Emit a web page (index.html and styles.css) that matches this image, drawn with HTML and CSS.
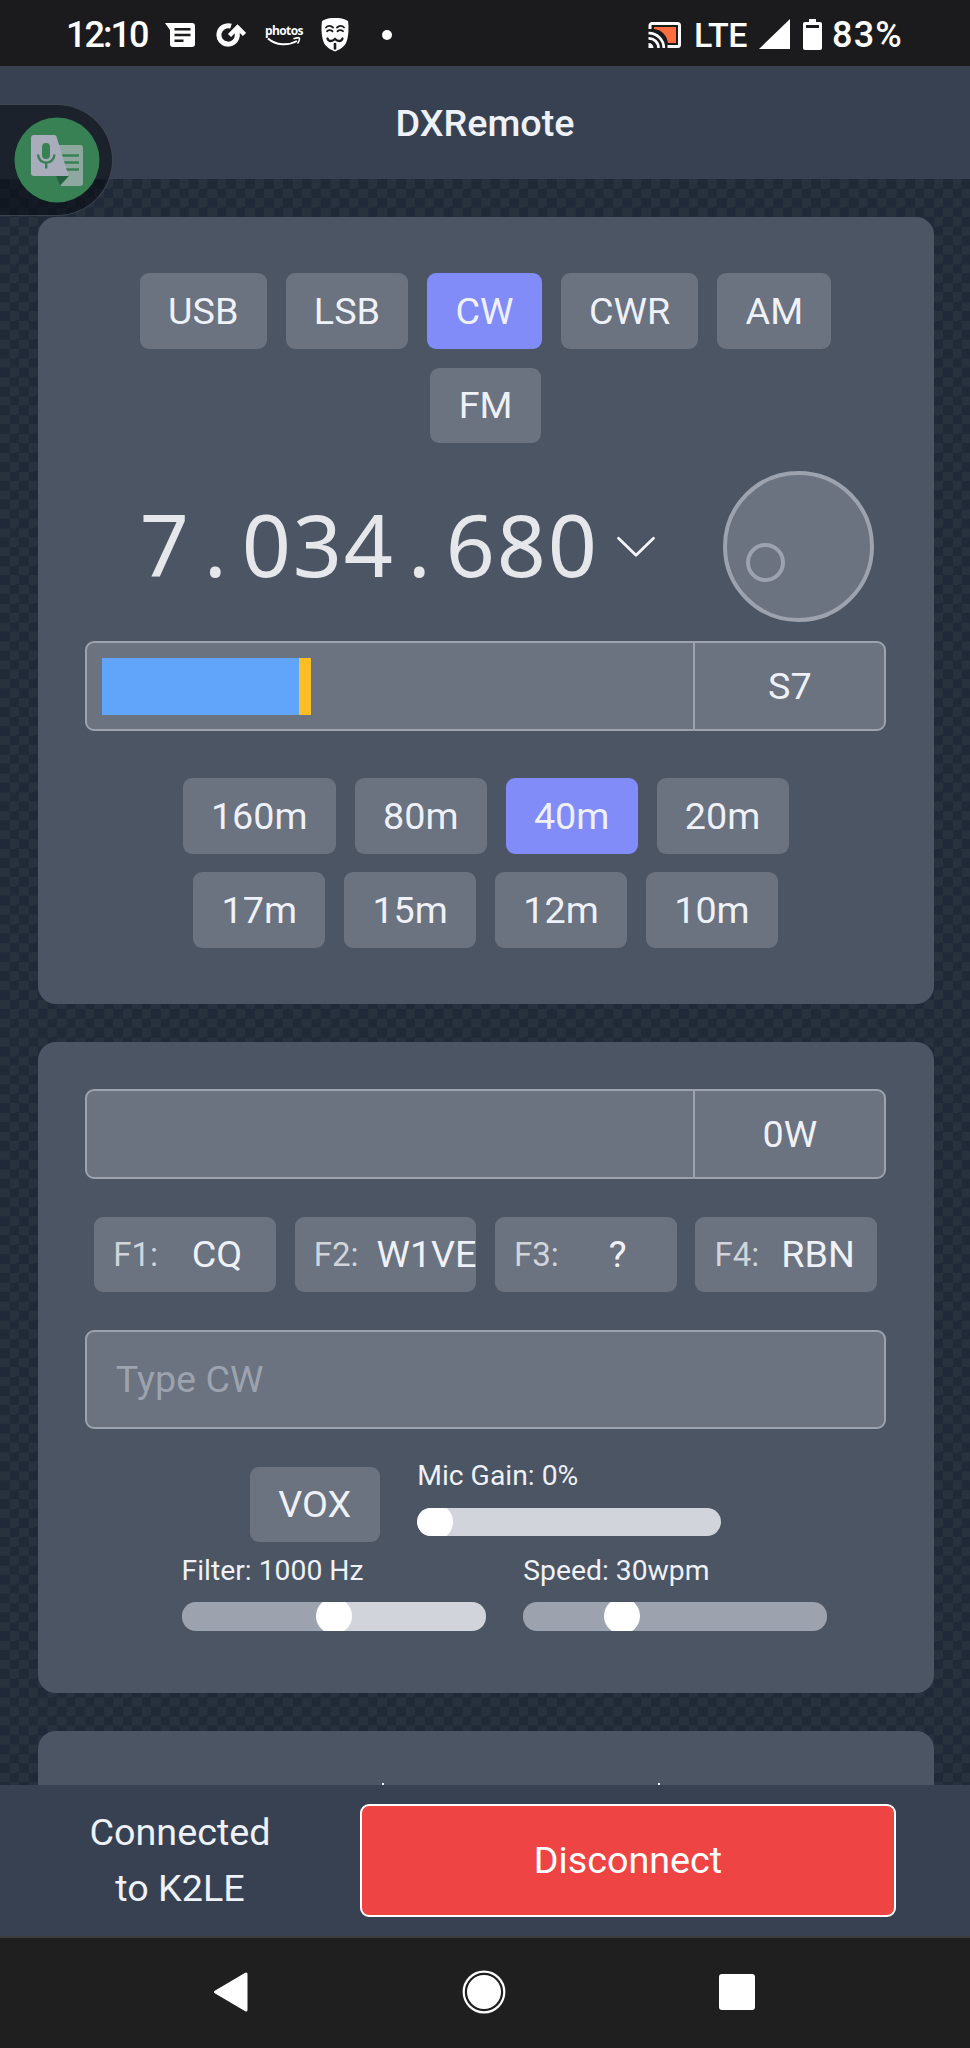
FILE: index.html
```
<!DOCTYPE html>
<html lang="en">
<head>
    <meta charset="UTF-8">
    <meta name="viewport" content="width=device-width, initial-scale=1.0">
    <title>DXRemote</title>
    <link rel="stylesheet" href="styles.css">
</head>
<body>

    <div class="status-bar">
        <div class="status-left">
            <span class="clock">12:10</span>
            <svg class="icon-message" width="30" height="24" viewBox="0 0 30 24">
                <path fill="#fff" d="M0 0h27a3 3 0 0 1 3 3v18a3 3 0 0 1-3 3H8a3 3 0 0 1-3-3V7z"/>
                <path stroke="#1b1b1d" stroke-width="2.4" d="M9.500 6.200h16M9.500 12h16M9.500 17.700h9"/>
            </svg>
            <svg class="icon-refresh" width="30" height="24" viewBox="0 0 30 24">
                <path fill="none" stroke="#fff" stroke-width="5" d="M15 3.200A9.200 9.200 0 1 0 21.300 11.500V6"/>
                <path fill="none" stroke="#fff" stroke-width="4.500" d="M13.500 12.500L21.500 4.500L28.500 11.500"/>
            </svg>
            <div class="icon-photos">
                <span>photos</span>
                <svg width="34" height="9" viewBox="0 0 34 9">
                    <path fill="none" stroke="#fff" stroke-width="2" d="M1 1.500C9 8.500 21 9 30 4"/>
                    <path fill="none" stroke="#fff" stroke-width="1.500" d="M26.500 1.800C29 .8 32 .6 32.400 1.200S32 4.800 30.500 6.500"/>
                </svg>
            </div>
            <svg class="icon-mask" width="28" height="34" viewBox="0 0 28 34">
                <path fill="#fff" d="M1 3C5 .5 9 0 14 0s9 .5 13 3c1 8 .5 16-2 22-2 4-7 7-11 8.500C10 32 5 29 3 25 .5 19 0 11 1 3z"/>
                <g fill="none" stroke="#1b1b1d" stroke-linecap="round">
                    <path stroke-width="1.800" d="M5 9.500C7 7 10 7.500 12 9.500M23 9.500C21 7 18 7.500 16 9.500"/>
                    <path stroke-width="1.800" d="M6 13.200C8 11.500 10 12 11.500 13.300M22 13.200C20 11.500 18 12 16.500 13.300"/>
                    <path stroke-width="2.300" d="M6.500 20.500C7.500 24 11.500 23.500 14 21C16.500 23.500 20.500 24 21.500 20.500"/>
                    <path stroke-width="2.600" d="M14 26v4.500"/>
                </g>
            </svg>
            <span class="dot"></span>
        </div>
        <div class="status-right">
            <svg class="icon-cast" width="34" height="28" viewBox="0 0 34 28">
                <path fill="#ff6e40" d="M6 6h22v16h-8C19 14 13 8.500 6 8z"/>
                <path fill="none" stroke="#fff" stroke-width="3" d="M2 8V4.500A2 2 0 0 1 4 2.500H29.500a2 2 0 0 1 2 2V23.500a2 2 0 0 1-2 2H19.500"/>
                <path fill="none" stroke="#fff" stroke-width="2.700" d="M.5 12.200A14.800 14.800 0 0 1 15.800 27M.5 17.400A9.600 9.600 0 0 1 10.500 27"/>
                <path fill="#fff" d="M.5 22a5 5 0 0 1 5 5h-5z"/>
            </svg>
            <span class="network">LTE</span>
            <svg class="icon-signal" width="31" height="31" viewBox="0 0 31 31">
                <path fill="#fff" d="M31 0v30H0z"/>
            </svg>
            <svg class="icon-battery" width="19" height="31" viewBox="0 0 19 31">
                <path fill="#fff" d="M6 0h7v3h4a2 2 0 0 1 2 2v24a2 2 0 0 1-2 2H2a2 2 0 0 1-2-2V5a2 2 0 0 1 2-2h4z"/>
                <path fill="#1b1b1d" d="M3 6h13v3H3z"/>
            </svg>
            <span class="percent">83%</span>
        </div>
    </div>

    <header>
        <h1>DXRemote</h1>
    </header>

    <main>
        <section class="panel">
            <div class="button-row">
                <button>USB</button>
                <button>LSB</button>
                <button class="active">CW</button>
                <button>CWR</button>
                <button>AM</button>
                <button>FM</button>
            </div>

            <div class="tuning">
                <div class="frequency"><span>7</span><span>.</span><span>0</span><span>3</span><span>4</span><span>.</span><span>6</span><span>8</span><span>0</span></div>
                <svg class="chevron" width="40" height="22" viewBox="0 0 40 22">
                    <path fill="none" stroke="#f3f4f6" stroke-width="2.800" stroke-linecap="round" stroke-linejoin="round" d="M2.500 2.200L20 19.200L37.500 2.200"/>
                </svg>
                <div class="dial"><div class="dial-knob"></div></div>
            </div>

            <div class="meter">
                <div class="meter-bar">
                    <div class="meter-level"></div>
                    <div class="meter-peak"></div>
                </div>
                <div class="meter-value">S7</div>
            </div>

            <div class="button-row bands">
                <button>160m</button>
                <button>80m</button>
                <button class="active">40m</button>
                <button>20m</button>
                <button>17m</button>
                <button>15m</button>
                <button>12m</button>
                <button>10m</button>
            </div>
        </section>

        <section class="panel">
            <div class="meter">
                <div class="meter-bar"></div>
                <div class="meter-value">0W</div>
            </div>

            <div class="macros">
                <button><small>F1:</small><span>CQ</span></button>
                <button><small>F2:</small><span>W1VE</span></button>
                <button><small>F3:</small><span>?</span></button>
                <button><small>F4:</small><span>RBN</span></button>
            </div>

            <input type="text" class="cw-input" placeholder="Type CW">

            <div class="controls">
                <button>VOX</button>
                <div class="slider">
                    <label>Mic Gain: 0%</label>
                    <div class="track light"><div class="thumb"></div></div>
                </div>
                <div class="slider filter">
                    <label>Filter: 1000 Hz</label>
                    <div class="track half"><div class="thumb filter-thumb"></div></div>
                </div>
                <div class="slider">
                    <label>Speed: 30wpm</label>
                    <div class="track"><div class="thumb speed-thumb"></div></div>
                </div>
            </div>
        </section>

        <section class="panel last">
            <i></i><i></i>
        </section>
    </main>

    <footer>
        <p>Connected<br>to K2LE</p>
        <button class="disconnect">Disconnect</button>
    </footer>

    <nav>
        <svg width="36" height="42" viewBox="0 0 36 42">
            <path fill="#fff" stroke="#fff" stroke-width="3" stroke-linejoin="round" d="M33 3V39L2.500 21z"/>
        </svg>
        <svg width="44" height="44" viewBox="0 0 44 44">
            <circle cx="22" cy="22" r="20.300" fill="none" stroke="#fff" stroke-width="2.200"/>
            <circle cx="22" cy="22" r="17" fill="#fff"/>
        </svg>
        <svg width="36" height="36" viewBox="0 0 36 36">
            <rect width="36" height="36" rx="3" fill="#fff"/>
        </svg>
    </nav>

    <!-- floating translate bubble -->
    <div class="bubble">
        <svg width="86" height="86" viewBox="0 0 86 86">
            <circle cx="43" cy="43" r="42.500" fill="#388155"/>
            <path fill="#8ea8a0" d="M44 28h22a3 3 0 0 1 3 3v35a3 3 0 0 1-3 3H47z"/>
            <path stroke="#388155" stroke-width="2.600" d="M47 38.500h18M49 45.500h16M51 52.500h14"/>
            <path fill="#388155" d="M42 59h13L46 69h-4z"/>
            <path fill="#22603f" d="M42 58.500h13L46 68z"/>
            <path fill="#a9adbb" d="M20 18h20.500a2 2 0 0 1 2 1.500L54.500 59H20a3 3 0 0 1-3-3V21a3 3 0 0 1 3-3z"/>
            <rect x="28" y="26" width="8" height="16" rx="4" fill="#388155"/>
            <path fill="none" stroke="#388155" stroke-width="2.400" d="M24 37.500a8.200 8.200 0 0 0 16.400 0M32.200 46v5.500"/>
        </svg>
    </div>

</body>
</html>
```
FILE: styles.css
```
html {
    font-size: 37.72px;
}

* {
    box-sizing: border-box;
}

body {
    margin: 0;
    height: 2048px;
    display: flex;
    flex-direction: column;
    position: relative;
    overflow: hidden;
    font-family: Roboto, sans-serif;
    color: #eef1f7;
    background-color: #1f2937;
}

.status-bar {
    height: 66px;
    flex: none;
    display: flex;
    justify-content: space-between;
    padding: 0 66px 0 66px;
    background-color: #1b1b1d;
    color: #fff;
    font-size: 36px;
    font-weight: 500;
}

.status-left,
.status-right {
    display: flex;
    align-items: center;
    padding-top: 3px;
}

.clock {
    width: 82px;
    letter-spacing: -2px;
    white-space: nowrap;
}

.icon-message {
    margin-left: 17px;
}

.icon-refresh {
    margin-left: 21px;
}

.icon-photos {
    width: 36px;
    margin-left: 19px;
    font: bold 12px/13px "Open Sans", sans-serif;
    letter-spacing: -0.6px;
}

.icon-photos span,
.icon-photos svg {
    display: block;
}

.icon-photos svg {
    margin-left: 2px;
}

.icon-mask {
    margin-left: 20px;
}

.dot {
    width: 10px;
    height: 10px;
    margin-left: 33px;
    border-radius: 50%;
    background-color: #fff;
}

.network {
    width: 53px;
    margin-left: 12px;
    font-size: 34px;
    letter-spacing: -0.3px;
}

.icon-signal {
    margin-left: 12px;
}

.icon-battery {
    margin-left: 13px;
}

.percent {
    width: 72px;
    margin-left: 10px;
    letter-spacing: 1.2px;
}

header {
    height: 3rem;
    flex: none;
    display: flex;
    align-items: center;
    justify-content: center;
    background-color: #374151;
}

h1 {
    margin: 0;
    font-size: 1rem;
    font-weight: 500;
}

main {
    flex: 1;
    min-height: 0;
    overflow: hidden;
    padding: 1rem 36.500px 1rem 1rem;
    background: conic-gradient(#28323f 25%, #1f2937 0 50%, #28323f 0 75%, #1f2937 0) 0 0 / 0.5rem 0.5rem;
}

.panel {
    padding: 1.25rem;
    margin-bottom: 1rem;
    border-radius: 18px;
    background-color: #4b5563;
}

button {
    height: 2rem;
    margin: 0.25rem;
    padding: 0 0.75rem;
    border: none;
    border-radius: 9px;
    background-color: #6b7280;
    color: #eef1f7;
    font-family: inherit;
    font-size: 1rem;
}

.active {
    background-color: #818cf8;
}

.button-row {
    display: flex;
    flex-wrap: wrap;
    justify-content: center;
}

.tuning {
    display: flex;
    align-items: center;
    height: 5rem;
    padding-left: 54px;
}

.frequency {
    display: flex;
    padding-bottom: 6px;
    font-family: "Noto Sans", sans-serif;
    font-size: 86px;
    line-height: 1;
    color: #e5e7eb;
}

.frequency span {
    width: 51px;
    text-align: center;
}

.chevron {
    margin-left: 18px;
}

.dial {
    width: 4rem;
    height: 4rem;
    margin-left: 67px;
    padding: 68px 0 0 19px;
    border: 4px solid #9ca3af;
    border-radius: 50%;
    background-color: #6b7280;
}

.dial-knob {
    width: 39px;
    height: 39px;
    border: 4px solid #9ca3af;
    border-radius: 50%;
}

.meter {
    display: flex;
    height: 89.800px;
    border: 2px solid #9ca3af;
    border-radius: 9px;
    background-color: #6b7280;
}

.meter-bar {
    flex: 1;
    display: flex;
    padding: 15px 15px 14px;
}

.meter-level {
    width: 197px;
    background-color: #60a5fa;
}

.meter-peak {
    width: 12px;
    background-color: #fbbf24;
}

.meter-value {
    width: 191px;
    display: flex;
    align-items: center;
    justify-content: center;
    border-left: 2px solid #9ca3af;
}

.bands {
    margin-top: 1rem;
    padding: 0 0.5rem;
}

.macros {
    display: flex;
    gap: 0.5rem;
    margin: 1rem 0.25rem;
}

.macros button {
    flex: 1 1 0;
    min-width: 0;
    margin: 0;
    padding: 0 0 0 19px;
    display: flex;
    align-items: center;
    overflow: hidden;
}

.macros small {
    font-size: 33px;
    color: #d1d5db;
}

.macros span {
    flex: 1;
    margin-left: 18px;
    padding-right: 18px;
}

.cw-input {
    display: block;
    width: 100%;
    height: 99px;
    padding: 0 29px;
    border: 2px solid #9ca3af;
    border-radius: 9px;
    background-color: #6b7280;
    color: #eef1f7;
    font-family: inherit;
    font-size: 1rem;
}

.cw-input::placeholder {
    color: #9ca3af;
}

.controls {
    display: flex;
    flex-wrap: wrap;
    justify-content: center;
    margin-top: 0.75rem;
}

.slider {
    width: 304px;
    height: 2.5rem;
    margin: 0 0.5rem;
}

.slider.filter {
    margin-left: 1.5rem;
}

.controls button {
    margin: 0.25rem 0.5rem;
}

.slider label {
    display: block;
    font-size: 0.75rem;
    line-height: 1rem;
    margin-bottom: 13px;
}

.track {
    height: 0.75rem;
    border-radius: 14px;
    overflow: hidden;
    background-color: #9ca3af;
}

.light {
    background-color: #d1d5db;
}

.half {
    background: linear-gradient(to right, #9ca3af 50%, #d1d5db 50%);
}

.thumb {
    width: 36px;
    height: 36px;
    margin-top: -4px;
    border-radius: 50%;
    background-color: #fff;
}

.filter-thumb {
    margin-left: 134px;
}

.speed-thumb {
    margin-left: 81px;
}

.last {
    height: 300px;
    display: flex;
    padding: 52px 0 0 344px;
}

.last i {
    width: 2px;
    height: 2px;
    margin-right: 274px;
    background-color: #eef1f7;
}

footer {
    height: 151.500px;
    flex: none;
    display: flex;
    align-items: center;
    background-color: #374151;
}

footer p {
    width: 360px;
    margin: 0;
    text-align: center;
    line-height: 1.5;
}

.disconnect {
    width: 536px;
    height: 3rem;
    margin: 0;
    border: 2px solid #fff;
    background-color: #ef4444;
    color: #fff;
}

nav {
    height: 112px;
    flex: none;
    display: flex;
    align-items: center;
    justify-content: space-between;
    padding: 0 215px 3px 213px;
    border-top: 2px solid #3c3c3c;
    background-color: #1f1f1f;
}

.bubble {
    position: absolute;
    left: -2px;
    top: 104px;
    width: 115px;
    height: 112px;
    padding: 12px 0 0 15px;
    border: 1px solid rgba(120, 125, 140, 0.4);
    border-radius: 0 56px 56px 0;
    background-color: rgba(6, 9, 14, 0.55);
}
```
